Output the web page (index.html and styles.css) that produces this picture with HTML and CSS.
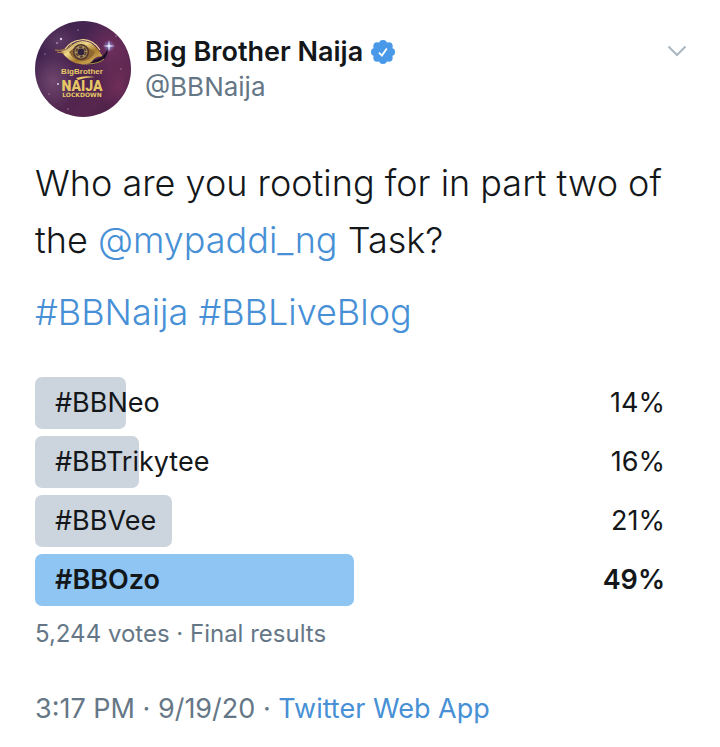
FILE: index.html
```html
<!DOCTYPE html>
<html lang="en">
<head>
<meta charset="utf-8">
<meta name="viewport" content="width=device-width, initial-scale=1">
<title>Big Brother Naija</title>
<link rel="stylesheet" href="styles.css">
</head>
<body>
<article class="tweet">
  <header class="header">
    <svg class="avatar" viewBox="0 0 96 96" role="img" aria-label="Big Brother Naija avatar">
      <defs>
        <linearGradient id="sky" x1="0" y1="0" x2="1" y2="1">
          <stop offset="0" stop-color="#3b2350"/>
          <stop offset=".45" stop-color="#4b2550"/>
          <stop offset=".75" stop-color="#58264e"/>
          <stop offset="1" stop-color="#3c1a42"/>
        </linearGradient>
        <radialGradient id="haze">
          <stop offset="0" stop-color="#7f5579" stop-opacity=".7"/>
          <stop offset="1" stop-color="#7f5579" stop-opacity="0"/>
        </radialGradient>
        <radialGradient id="rose">
          <stop offset="0" stop-color="#76305d" stop-opacity=".8"/>
          <stop offset="1" stop-color="#76305d" stop-opacity="0"/>
        </radialGradient>
        <radialGradient id="flare">
          <stop offset="0" stop-color="#d9e2ff"/>
          <stop offset=".3" stop-color="#8a86d8" stop-opacity=".7"/>
          <stop offset="1" stop-color="#8a86d8" stop-opacity="0"/>
        </radialGradient>
        <linearGradient id="gold" x1="0" y1="0" x2="1" y2="1">
          <stop offset="0" stop-color="#8a6427"/>
          <stop offset=".35" stop-color="#f0d98a"/>
          <stop offset=".6" stop-color="#a87a2c"/>
          <stop offset="1" stop-color="#ead07a"/>
        </linearGradient>
        <clipPath id="disc"><circle cx="48" cy="48" r="48"/></clipPath>
      </defs>
      <g clip-path="url(#disc)">
        <rect width="96" height="96" fill="url(#sky)"/>
        <ellipse cx="18" cy="60" rx="24" ry="30" fill="url(#haze)"/>
        <ellipse cx="24" cy="20" rx="22" ry="18" fill="url(#haze)" opacity=".6"/>
        <ellipse cx="76" cy="28" rx="30" ry="34" fill="url(#rose)"/>
        <ellipse cx="84" cy="66" rx="20" ry="26" fill="url(#rose)"/>
        <g fill="#d7c5e8">
          <circle cx="26" cy="18" r="1.2"/><circle cx="22" cy="22" r=".8"/>
          <circle cx="23" cy="63" r="1.1"/><circle cx="43" cy="9" r=".6"/>
          <circle cx="10" cy="33" r=".6"/><circle cx="81" cy="15" r=".6"/>
          <circle cx="86" cy="48" r=".6"/><circle cx="33" cy="88" r=".6"/>
          <circle cx="14" cy="73" r=".6"/>
        </g>
        <path d="M26 30Q33 29 37 24Q46 17 56 22Q64 28 68 36Q62 34 58 39Q54 45 45 43Q34 42 26 30Z" fill="url(#gold)"/>
        <path d="M34 31Q45 19 60 31Q56 40 46 40Q38 39 34 31Z" fill="#8f6732"/>
        <path d="M20 29Q30 31 37 23M22 31L29 32" fill="none" stroke="#b88d43" stroke-width="1"/>
        <path d="M30 28Q36 20 45 19Q57 17 65 29" fill="none" stroke="#f2dc93" stroke-width="1.2"/>
        <path d="M59 39Q69 37 73 27Q73 40 60 43Q55 44 50 43Q57 42 59 39Z" fill="#201129"/>
        <path d="M51 43Q64 43 69 38" fill="none" stroke="#dcb75b" stroke-width=".8"/>
        <circle cx="46" cy="31" r="8" fill="#4d342c"/>
        <circle cx="46" cy="31" r="6.5" fill="#b69863"/>
        <circle cx="46" cy="31" r="4.8" fill="none" stroke="#5a402f" stroke-width="1.8" stroke-dasharray="3.5 1.5"/>
        <circle cx="46" cy="31" r="3.4" fill="#30223b"/>
        <circle cx="74" cy="25" r="6" fill="url(#flare)"/>
        <path d="M74 19l.8 5.2 5.200.8-5.2.8-.8 5.2-.8-5.200-5.2-.8 5.2-.8Z" fill="#e9efff"/>
        <g fill="#e6c766" text-anchor="middle">
          <text class="logo-brand" x="47" y="53">BigBrother</text>
          <path d="M41 57Q49 54 60 56Q50 56.500 43 59Z"/>
          <text class="logo-name" x="47" y="70">NAIJA</text>
          <text class="logo-sub" x="47" y="76">LOCKDOWN</text>
        </g>
      </g>
    </svg>
    <div class="author">
      <div class="name-row">
        <a class="name" href="#">Big Brother Naija</a>
        <svg class="verified" viewBox="0 0 24 24" role="img" aria-label="Verified account">
          <g fill="#4a99e9">
            <circle cx="12" cy="12" r="9.5"/>
            <circle cx="12" cy="4" r="4"/><circle cx="17.7" cy="6.3" r="4"/>
            <circle cx="20" cy="12" r="4"/><circle cx="17.7" cy="17.7" r="4"/>
            <circle cx="12" cy="20" r="4"/><circle cx="6.3" cy="17.7" r="4"/>
            <circle cx="4" cy="12" r="4"/><circle cx="6.3" cy="6.3" r="4"/>
          </g>
          <path d="M8 12.6l2.9 3L15.8 8.4" fill="none" stroke="#fff" stroke-width="1.8"/>
        </svg>
      </div>
      <a class="handle" href="#">@BBNaija</a>
    </div>
    <button class="more" type="button" aria-label="More options">
      <svg viewBox="0 0 20 12" aria-hidden="true"><path d="M1.5 1.5L10 10L18.5 1.5" fill="none" stroke="#aab8c2" stroke-width="2"/></svg>
    </button>
  </header>

  <div class="body">
    <p>Who are you rooting for in part two of the <a href="#">@mypaddi_ng</a> Task?</p>
    <p><a href="#">#BBNaija</a> <a href="#">#BBLiveBlog</a></p>
  </div>

  <ul class="poll">
    <li class="option"><span class="bar" style="width:14%"></span><span>#BBNeo</span><span>14%</span></li>
    <li class="option"><span class="bar" style="width:16%"></span><span>#BBTrikytee</span><span>16%</span></li>
    <li class="option"><span class="bar" style="width:21%"></span><span>#BBVee</span><span>21%</span></li>
    <li class="option winner"><span class="bar" style="width:49%"></span><span>#BBOzo</span><span>49%</span></li>
  </ul>
  <p class="votes">5,244 votes · Final results</p>

  <footer class="meta">3:17 PM · 9/19/20 · <a href="#">Twitter Web App</a></footer>
</article>
</body>
</html>
```
FILE: styles.css
```css
* {
  box-sizing: border-box;
}

body {
  margin: 0;
  background: #fff;
  color: #14171a;
  font-family: Inter, "Liberation Sans", sans-serif;
}

a {
  color: #4790d6;
  text-decoration: none;
}

p {
  margin: 0;
}

.tweet {
  padding: 21px 35px;
}

.header {
  display: flex;
  align-items: center;
  gap: 14px;
}

.avatar {
  flex: none;
  width: 96px;
  height: 96px;
}

.logo-brand {
  font: 700 8px "Liberation Sans", sans-serif;
}

.logo-name {
  font: 900 14px Roboto, sans-serif;
}

.logo-sub {
  font: 700 6px "DejaVu Sans", sans-serif;
}

.author {
  flex: 1;
  font-size: 26px;
  line-height: 35px;
}

.name-row {
  display: flex;
  align-items: center;
  gap: 8px;
}

.name {
  color: #14171a;
  font-size: 27px;
  font-weight: 600;
}

.verified {
  width: 24px;
  height: 24px;
}

.handle {
  color: #657786;
}

.more {
  align-self: flex-start;
  margin: 24px -2px 0 0;
  padding: 0;
  border: 0;
  background: none;
}

.more svg {
  display: block;
  width: 20px;
  height: 12px;
}

.body {
  display: grid;
  gap: 15px;
  margin-top: 38px;
  font-size: 36px;
  font-weight: 300;
  line-height: 57px;
}

.poll {
  display: grid;
  gap: 7px;
  margin: 36px 0 0;
  padding: 0;
  list-style: none;
  font-size: 27px;
  line-height: 52px;
}

.option {
  position: relative;
  display: flex;
  justify-content: space-between;
  padding: 0 20px;
  isolation: isolate;
}

.bar {
  position: absolute;
  inset: 0 auto 0 0;
  z-index: -1;
  border-radius: 7px;
  background: #ccd4dd;
}

.winner {
  font-weight: 600;
}

.winner .bar {
  background: #8ec5f2;
}

.votes {
  margin-top: 12px;
  color: #657786;
  font-size: 24px;
  line-height: 32px;
}

.meta {
  margin-top: 42px;
  color: #657786;
  font-size: 27px;
  line-height: 34px;
}
```
